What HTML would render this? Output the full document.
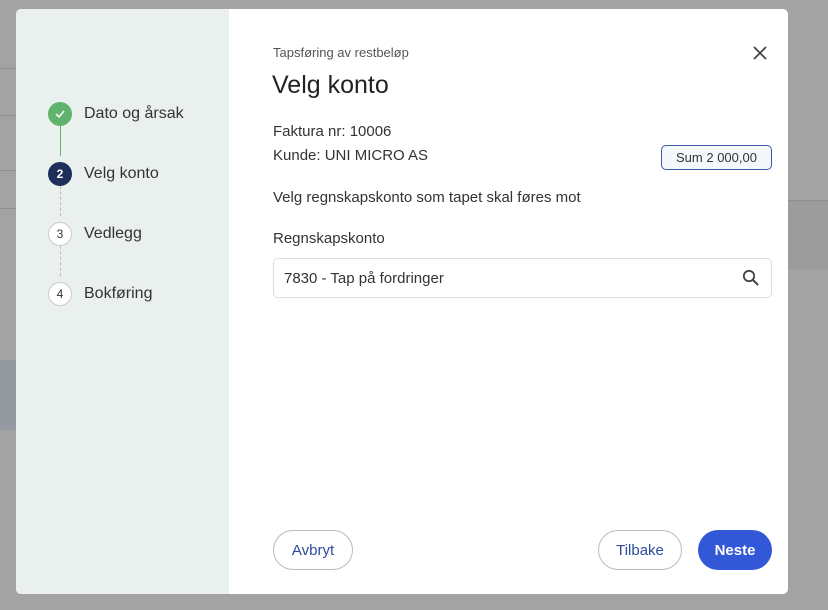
<!DOCTYPE html>
<html><head><meta charset="utf-8"><style>
*{box-sizing:border-box;margin:0;padding:0}
body{width:828px;height:610px;background:#a3a3a3;font-family:"Liberation Sans",sans-serif;position:relative;overflow:hidden}
.bgrow{position:absolute;left:0;width:16px;border-top:1px solid #8f8f8f}
.modal{position:absolute;left:16px;top:9px;width:772px;height:585px;background:#fff;border-radius:5px;overflow:hidden}
.side{position:absolute;left:0;top:0;width:213px;height:100%;background:#e9f0ee}
.step{position:absolute;left:32px;display:flex;align-items:center}
.c{width:24px;height:24px;border-radius:50%;display:flex;align-items:center;justify-content:center;font-size:12px;margin-right:12px}
.st{font-size:16px;color:#333}
.line{position:absolute;left:44px;width:0}
.t{position:absolute;font-size:15px;color:#333}
.btn{position:absolute;top:521px;height:40px;border-radius:20px;font-size:15px;display:flex;align-items:center;justify-content:center}
</style></head><body>
<div class="bgrow" style="top:68px"></div><div class="bgrow" style="top:115px"></div><div class="bgrow" style="top:170px"></div><div class="bgrow" style="top:208px"></div>
<div style="position:absolute;left:0;top:360px;width:16px;height:70px;background:#959aa0"></div>
<div style="position:absolute;left:788px;top:200px;width:40px;height:70px;background:#9c9c9c;border-top:1px solid #8f8f8f"></div>
<div class="modal">
 <div class="side">
  <div class="line" style="top:117px;height:30px;border-left:1px solid #5fb36d"></div>
  <div class="line" style="top:177px;height:30px;border-left:1px dashed #bbb"></div>
  <div class="line" style="top:237px;height:30px;border-left:1px dashed #bbb"></div>
  <div class="step" style="top:93px"><div class="c" style="background:#5fb36d"><svg width="12" height="10" viewBox="0 0 12 10"><path d="M2 5l3 3 5-6" fill="none" stroke="#fff" stroke-width="1.5"/></svg></div><span class="st">Dato og årsak</span></div>
  <div class="step" style="top:153px"><div class="c" style="background:#1e2f5a;color:#fff;font-weight:bold">2</div><span class="st">Velg konto</span></div>
  <div class="step" style="top:213px"><div class="c" style="background:#fff;border:1px solid #ccc;color:#333">3</div><span class="st">Vedlegg</span></div>
  <div class="step" style="top:273px"><div class="c" style="background:#fff;border:1px solid #ccc;color:#333">4</div><span class="st">Bokføring</span></div>
 </div>
 <div class="t" style="left:257px;top:36px;font-size:13px;color:#555">Tapsføring av restbeløp</div>
 <div class="t" style="left:256px;top:62px;font-size:25px;color:#222">Velg konto</div>
 <svg style="position:absolute;left:737px;top:37px" width="14" height="14" viewBox="0 0 14 14"><path d="M1 1l12 12M13 1L1 13" stroke="#444" stroke-width="1.8"/></svg>
 <div class="t" style="left:257px;top:114px">Faktura nr: 10006</div>
 <div class="t" style="left:257px;top:138px">Kunde: UNI MICRO AS</div>
 <div style="position:absolute;left:645px;top:136px;width:111px;height:25px;border:1px solid #3d5aa8;border-radius:5px;background:#f4f7fc;font-size:13px;color:#333;display:flex;align-items:center;justify-content:center">Sum 2 000,00</div>
 <div class="t" style="left:257px;top:180px">Velg regnskapskonto som tapet skal føres mot</div>
 <div class="t" style="left:257px;top:221px">Regnskapskonto</div>
 <div style="position:absolute;left:257px;top:249px;width:499px;height:40px;border:1px solid #ddd;border-radius:5px;font-size:15px;color:#333;padding:11px 10px">7830 - Tap på fordringer</div>
 <svg style="position:absolute;left:726px;top:260px" width="18" height="18" viewBox="0 0 18 18"><circle cx="7" cy="7" r="5.2" fill="none" stroke="#444" stroke-width="1.8"/><path d="M11 11l5 5" stroke="#444" stroke-width="2"/></svg>
 <div class="btn" style="left:257px;width:80px;border:1px solid #bbb;color:#2c4b9e">Avbryt</div>
 <div class="btn" style="left:582px;width:84px;border:1px solid #bbb;color:#2c4b9e">Tilbake</div>
 <div class="btn" style="left:682px;width:74px;background:#3258d8;color:#fff;font-weight:bold">Neste</div>
</div>
</body></html>
